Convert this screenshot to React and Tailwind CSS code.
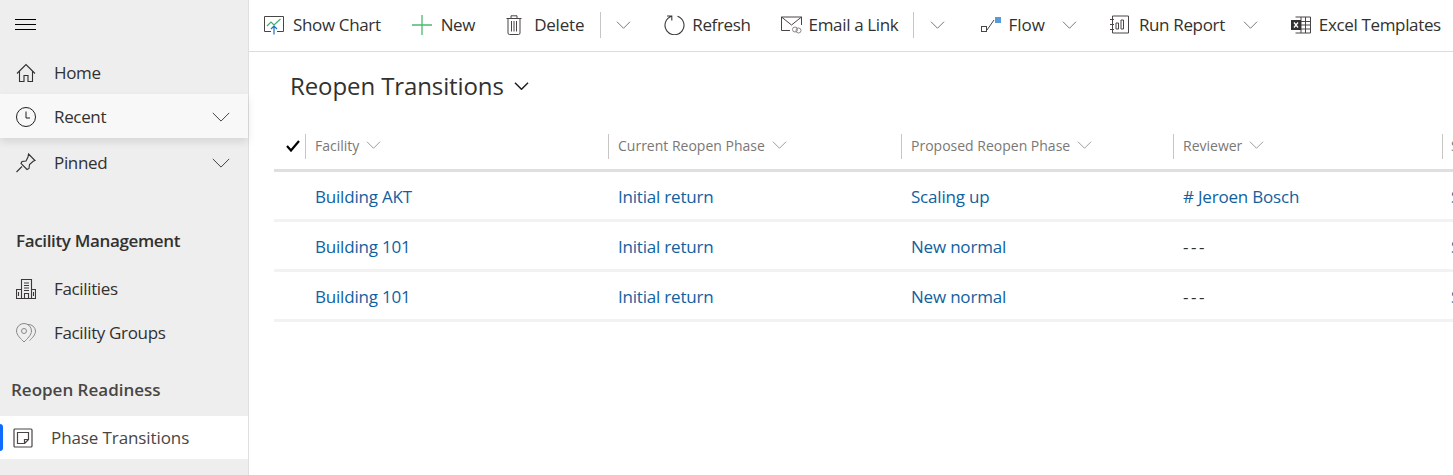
import React from "react";

const Chevron = ({ className = "" }) => (
  <svg viewBox="0 0 20 11" fill="none" stroke="currentColor" strokeWidth="1" className={className}>
    <path d="M1 1l9 9 9-9" />
  </svg>
);

const HomeIcon = () => (
  <svg width="20" height="20" viewBox="0 0 20 20" fill="none" stroke="#323130" strokeWidth="1.100">
    <path d="M1 10.500L10 1.500l9 9M3.500 8.500V18.500h4.500v-6h4v6h4.500V8.500" />
  </svg>
);

const ClockIcon = () => (
  <svg width="20" height="20" viewBox="0 0 20 20" fill="none" stroke="#201f1e" strokeWidth="1">
    <circle cx="10" cy="10" r="9.500" />
    <path d="M10 4.500v6.500h4" />
  </svg>
);

const PinIcon = () => (
  <svg width="20" height="20" viewBox="0 0 20 20" fill="none" stroke="#323130" strokeWidth="1.100">
    <path d="M12.500 1l6.500 6.500-1.500.5-4 3.500-.5 4-2 1-6-6 1-2 4-.5L12 4z" />
    <path d="M6 13.500L.5 19" />
  </svg>
);

const BuildingIcon = () => (
  <svg width="20" height="20" viewBox="0 0 20 20" fill="none" stroke="#3b3a39" strokeWidth="1.100">
    <path d="M5.500 19.500V.5h10v19M5.500 10.500H.5v9h19v-9h-4" />
    <path d="M8 4h5M8 6.500h5M8 9h5M8 11.500h5M8.500 19.500v-5h4v5M2.500 13v4M17.500 13v4" />
  </svg>
);

const GroupPinIcon = () => (
  <svg width="20" height="20" viewBox="0 0 20 20" fill="none" stroke="#8a8886" strokeWidth="1">
    <path d="M8 19C5 16 .5 12 .5 8a7.500 7.500 0 0 1 15 0c0 4-4.500 8-7.500 11z" />
    <circle cx="8" cy="8" r="2.500" />
    <path d="M12 1.500a7 7 0 0 1 7.500 6.500c0 3.500-3 7-6 9.500" />
  </svg>
);

const NoteIcon = () => (
  <svg width="20" height="20" viewBox="0 0 20 20" fill="none" stroke="#484644" strokeWidth="1.200">
    <rect x="1" y="1" width="18" height="18" rx="1" />
    <path d="M4.500 4.500h11v7h-4v4h-7zM15.500 11.500l-4 4" />
  </svg>
);

const ChartIcon = () => (
  <svg width="20" height="20" viewBox="0 0 20 20" fill="none">
    <path d="M7 16.500H.5V1.500h19v15H13" stroke="#484644" />
    <path d="M3 11l4-4 3 3 6.500-6" stroke="#3fae6a" strokeWidth="1.200" />
    <path d="M10 19.500V11.500M7 14l3-3 3 3" stroke="#1f6fbf" strokeWidth="1.200" />
  </svg>
);

const PlusIcon = () => (
  <svg width="20" height="20" viewBox="0 0 20 20" fill="none" stroke="#4cb873" strokeWidth="1.300">
    <path d="M10 0v20M0 10h20" />
  </svg>
);

const TrashIcon = () => (
  <svg width="16" height="20" viewBox="0 0 16 20" fill="none" stroke="#484644" strokeWidth="1">
    <path d="M.5 3.500h15M2 3.500V18a1.500 1.500 0 0 0 1.500 1.500h9A1.500 1.500 0 0 0 14 18V3.500M5 3.500V.8h6v2.700" />
    <path d="M5.500 6v10.500M8 6v10.500M10.500 6v10.500" />
  </svg>
);

const RefreshIcon = () => (
  <svg width="21" height="21" viewBox="0 0 21 21" fill="none" stroke="#3b3a39" strokeWidth="1.100">
    <path d="M7.500 2.200a9.500 9.500 0 1 0 6 0M7.800 6.500V2H3" />
  </svg>
);

const MailIcon = () => (
  <svg width="21" height="18" viewBox="0 0 21 18" fill="none" stroke="#484644" strokeWidth="1">
    <path d="M9 14.500H.5V1h20v8M.5 1l10 8 10-8" />
    <circle cx="14" cy="13.500" r="2.500" stroke="#8a8886" />
    <circle cx="17.500" cy="14.500" r="2.500" stroke="#8a8886" />
  </svg>
);

const FlowIcon = () => (
  <svg width="20" height="16" viewBox="0 0 20 16" fill="none">
    <rect x=".5" y="9.500" width="5" height="5" stroke="#484644" />
    <path d="M6 13l7-10" stroke="#484644" />
    <rect x="14" y="0" width="6" height="6" fill="#5b9bd5" />
  </svg>
);

const ReportIcon = () => (
  <svg width="19" height="19" viewBox="0 0 19 19" fill="none" stroke="#484644" strokeWidth="1">
    <path d="M2.500 1h16v17h-16zM0 4.500h4M0 9.500h4M0 14.500h4" />
    <path d="M6 8h2.500v6H6zM11 5h2.500v9H11z" />
  </svg>
);

const ExcelIcon = () => (
  <svg width="20" height="18" viewBox="0 0 20 18" fill="none">
    <path d="M4.500 1h15v16h-15M10 1v16M14.500 1v16M9 5.500h10.500M9 9h10.500M9 13h10.500" stroke="#484644" />
    <rect x="0" y="4" width="10" height="10" fill="#323130" />
    <path d="M3 6.500l4 5M7 6.500l-4 5" stroke="#fff" strokeWidth="1.300" />
  </svg>
);

const NavRow = ({ icon, label, chevron, className = "" }) => (
  <div className={`flex items-center pl-4 pr-[17px] text-[#323130] ${className}`}>
    <span className="flex w-5 justify-center">{icon}</span>
    <span className="ml-[18px] flex-1">{label}</span>
    {chevron && <Chevron className="h-[10px] w-5 text-[#323130]" />}
  </div>
);

const ToolButton = ({ icon, label, className = "", labelClass = "ml-2" }) => (
  <div className={`flex shrink-0 items-center ${className}`}>
    {icon}
    <span className={`text-[#323130] ${labelClass}`}>{label}</span>
  </div>
);

const Split = ({ className = "" }) => <div className={`h-[26px] w-px shrink-0 bg-[#c8c6c4] ${className}`} />;

const ToolChevron = ({ className = "" }) => <Chevron className={`h-2 w-[15px] shrink-0 text-[#484644] ${className}`} />;

const columns = [
  { label: "Facility", width: "w-[303px]", pad: "pl-[9px]" },
  { label: "Current Reopen Phase", width: "w-[293px]", pad: "pl-[9px]" },
  { label: "Proposed Reopen Phase", width: "w-[272px]", pad: "pl-[9px]" },
  { label: "Reviewer", width: "w-[269px]", pad: "pl-[9px]" },
  { label: "Status", width: "w-[200px]", pad: "pl-[8px]" },
];

const rows = [
  ["Building AKT", "Initial return", "Scaling up", "# Jeroen Bosch", "Submitted"],
  ["Building 101", "Initial return", "New normal", "---", "Submitted"],
  ["Building 101", "Initial return", "New normal", "---", "Submitted"],
];

export default function App() {
  return (
    <div className="flex h-[475px] w-[1453px] overflow-hidden bg-white font-['Open_Sans',sans-serif] text-[17px] tracking-[-0.35px]">
      <aside className="flex w-[249px] shrink-0 flex-col border-r border-[#e1dfdd] bg-[#eeeeee]">
        <div className="flex h-[52px] items-center pb-[4px] pl-[15px]">
          <div className="flex w-[21px] flex-col gap-[4px]">
            <div className="h-px bg-black" />
            <div className="h-px bg-black" />
            <div className="h-px bg-black" />
          </div>
        </div>
        <NavRow icon={<HomeIcon />} label="Home" className="h-[42px]" />
        <NavRow
          icon={<ClockIcon />}
          label="Recent"
          chevron
          className="h-[44px] bg-[#f8f8f8] pt-[2px] shadow-[0_4px_8px_rgba(0,0,0,0.1)]"
        />
        <NavRow icon={<PinIcon />} label="Pinned" chevron className="mt-[3px] h-[44px]" />
        <div className="mt-[43px] pl-4 font-semibold tracking-[-0.35px] text-[#323130]">Facility Management</div>
        <NavRow icon={<BuildingIcon />} label="Facilities" className="mt-[13px] h-[44px]" />
        <NavRow icon={<GroupPinIcon />} label="Facility Groups" className="h-[44px]" />
        <div className="mt-[22px] pl-[11px] font-semibold tracking-[0px] text-[#484644]">Reopen Readiness</div>
        <div className="mt-[14px] flex h-[43px] items-center bg-white text-[#484644]">
          <div className="h-[27px] w-[3px] rounded-r-sm bg-[#0f6cff]" />
          <span className="ml-[10px]"><NoteIcon /></span>
          <span className="ml-[18px] tracking-[-0.1px]">Phase Transitions</span>
        </div>
      </aside>

      <main className="min-w-0 flex-1">
        <div className="flex h-[52px] items-center whitespace-nowrap border-b border-[#dcdcdc] pb-[2px]">
          <ToolButton icon={<ChartIcon />} label="Show Chart" className="ml-[15px]" labelClass="ml-[9px]" />
          <ToolButton icon={<PlusIcon />} label="New" className="ml-[31px]" labelClass="ml-[9px]" />
          <ToolButton icon={<TrashIcon />} label="Delete" className="ml-[31px]" labelClass="ml-[12px] tracking-[-0.2px]" />
          <Split className="ml-[16px]" />
          <ToolChevron className="ml-[15px]" />
          <ToolButton icon={<RefreshIcon />} label="Refresh" className="ml-[33px]" labelClass="ml-[7px]" />
          <ToolButton icon={<MailIcon />} label="Email a Link" className="ml-[30px]" labelClass="ml-[7px]" />
          <Split className="ml-[15px]" />
          <ToolChevron className="ml-[16px]" />
          <ToolButton icon={<FlowIcon />} label="Flow" className="ml-[36px]" labelClass="ml-[7px] tracking-[0px]" />
          <ToolChevron className="ml-[17px]" />
          <ToolButton icon={<ReportIcon />} label="Run Report" className="ml-[33px]" labelClass="ml-[10px]" />
          <ToolChevron className="ml-[18px]" />
          <ToolButton icon={<ExcelIcon />} label="Excel Templates" className="ml-[33px]" labelClass="ml-2" />
        </div>

        <div className="flex h-[72px] items-center pb-[4px] pl-[41px]">
          <h1 className="text-[24px] font-medium tracking-[-0.1px] text-[#323130]">Reopen Transitions</h1>
          <Chevron className="ml-[10px] h-[8px] w-[15px] text-[#201f1e] [&>path]:stroke-[2]" />
        </div>

        <div className="ml-[25px]">
          <div className="flex h-[48px] items-center border-b-[3px] border-[#e1dfdd] pb-[1px]">
            <div className="flex w-[31px] shrink-0 justify-center pl-[6px]">
              <svg width="14" height="12" viewBox="0 0 14 12" fill="none" stroke="#000" strokeWidth="2.200">
                <path d="M1 6l4 4.500L13 1" />
              </svg>
            </div>
            {columns.map((col) => (
              <div key={col.label} className={`flex h-[25px] shrink-0 items-center border-l border-[#c8c6c4] pb-[2px] text-[14px] tracking-[0px] text-[#7a7876] ${col.pad} ${col.width}`}>
                {col.label}
                <Chevron className="ml-[7px] h-2 w-[15px] text-[#7a7876]" />
              </div>
            ))}
          </div>
          {rows.map((row, i) => (
            <div key={i} className="flex h-[50px] items-center border-b-[3px] border-[#f3f2f1] pl-[41px] pt-[3px]">
              {row.map((cell, j) => (
                <div
                  key={j}
                  className={`shrink-0 whitespace-nowrap ${columns[j].width} ${j === 4 ? "-ml-px" : ""} ${cell === "---" ? "tracking-[2.5px] text-[#323130]" : "tracking-[-0.2px] text-[#11619f]"}`}
                >
                  {cell}
                </div>
              ))}
            </div>
          ))}
        </div>
      </main>
    </div>
  );
}
